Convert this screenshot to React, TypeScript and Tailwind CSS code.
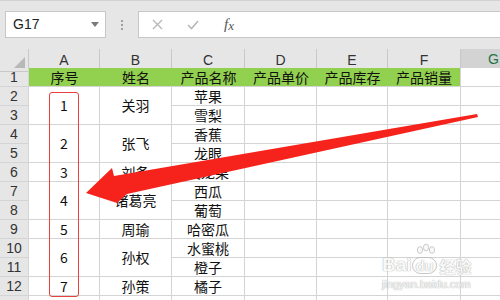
import React from 'react';

const colHeads = ['A', 'B', 'C', 'D', 'E', 'F'];

const rowHeads = [
    { n: '1', cls: 'row-start-1' },
    { n: '2', cls: 'row-start-2' },
    { n: '3', cls: 'row-start-3' },
    { n: '4', cls: 'row-start-4' },
    { n: '5', cls: 'row-start-5' },
    { n: '6', cls: 'row-start-6' },
    { n: '7', cls: 'row-start-7' },
    { n: '8', cls: 'row-start-8' },
    { n: '9', cls: 'row-start-9' },
    { n: '10', cls: 'row-start-10' },
    { n: '11', cls: 'row-start-11' },
    { n: '12', cls: 'row-start-12' },
    { n: '', cls: 'row-start-13' },
];

// merged cells in columns A and B
const groups = [
    { cls: 'row-start-2 row-span-2', id: '1', name: '关羽' },
    { cls: 'row-start-4 row-span-2', id: '2', name: '张飞' },
    { cls: 'row-start-6', id: '3', name: '刘备' },
    { cls: 'row-start-7 row-span-2', id: '4', name: '诸葛亮' },
    { cls: 'row-start-9', id: '5', name: '周瑜' },
    { cls: 'row-start-10 row-span-2', id: '6', name: '孙权' },
    { cls: 'row-start-12', id: '7', name: '孙策' },
    { cls: 'row-start-13', id: '', name: '' },
];

const products = ['苹果', '雪梨', '香蕉', '龙眼', '火龙果', '西瓜', '葡萄', '哈密瓜', '水蜜桃', '橙子', '橘子', ''];

const header = ['序号', '姓名', '产品名称', '产品单价', '产品库存', '产品销量'];

const cjk = "font-['Noto_Sans_CJK_SC',sans-serif]";

export default function App() {
    return (
        <div className="relative w-[500px] h-[300px] overflow-hidden bg-white font-['Liberation_Sans',sans-serif]">
            {/* Formula bar */}
            <div className="h-[49px] bg-[#e6e6e6] border-t border-[#d2d2d2] pt-[10px] flex items-start">
                <div className="ml-[5px] w-[101px] h-[27px] bg-white border border-[#c6c6c6] flex items-center pl-[7px] pr-[6px]">
                    <span className="text-[14px] text-[#222] flex-1">G17</span>
                    <svg width="8" height="5" viewBox="0 0 8 5">
                        <path d="M0 0 L8 0 L4 5 Z" fill="#7a7a7a" />
                    </svg>
                </div>
                <div className="w-[32px] h-[27px] flex flex-col items-center justify-center gap-[2px]">
                    <span className="w-[2px] h-[2px] bg-[#a0a0a0]" />
                    <span className="w-[2px] h-[2px] bg-[#a0a0a0]" />
                    <span className="w-[2px] h-[2px] bg-[#a0a0a0]" />
                </div>
                <div className="flex-1 h-[27px] bg-white border border-r-0 border-[#c6c6c6] flex items-center">
                    <span className="w-[36px] flex justify-center">
                        <svg width="11" height="11" viewBox="0 0 11 11">
                            <path d="M1 1 L10 10 M10 1 L1 10" stroke="#b8b8b8" strokeWidth="1.4" />
                        </svg>
                    </span>
                    <span className="w-[36px] flex justify-center">
                        <svg width="12" height="10" viewBox="0 0 12 10">
                            <path d="M1 5 L4.5 8.5 L11 1" stroke="#b8b8b8" strokeWidth="1.6" fill="none" />
                        </svg>
                    </span>
                    <span className="w-[36px] flex justify-center font-['Liberation_Serif',serif] italic text-[15px] text-[#555] leading-none">
                        f<span className="text-[13px] mt-[2px]">x</span>
                    </span>
                </div>
            </div>

            {/* Column headers */}
            <div className="grid grid-cols-[28px_70px_71px_72px_71px_70px_72px_1fr] gap-x-px bg-[#c8c8c8] h-[19px]">
                <div className="bg-[#e6e6e6] relative border-b border-[#c8c8c8]">
                    <svg className="absolute right-[3px] bottom-[3px]" width="11" height="11" viewBox="0 0 11 11">
                        <path d="M11 0 L11 11 L0 11 Z" fill="#b8b8b8" />
                    </svg>
                </div>
                {colHeads.map((c) => (
                    <div key={c} className="bg-[#e6e6e6] border-b border-[#92d050] flex items-center justify-center text-[14px] text-[#333]">
                        {c}
                    </div>
                ))}
                <div className="bg-[#d3d3d3] border-b-2 border-[#217346] flex items-center justify-start pl-[27px] text-[14px] text-[#217346]">
                    G
                </div>
            </div>

            {/* Sheet grid */}
            <div className={`grid grid-cols-[28px_70px_71px_72px_71px_70px_72px_1fr] grid-rows-[repeat(13,18px)] gap-px bg-[#d4d4d4] text-[14px] text-[#111] ${cjk}`}>
                {rowHeads.map((r) => (
                    <div key={r.cls} className={`${r.cls} col-start-1 bg-[#e6e6e6] flex items-center justify-center text-[#333] font-['Liberation_Sans',sans-serif]`}>
                        {r.n}
                    </div>
                ))}

                <div className="row-start-1 col-start-2 col-span-6 bg-[#92d050] grid grid-cols-[71px_72px_73px_72px_71px_72px]">
                    {header.map((h) => (
                        <div key={h} className="flex items-center justify-center leading-none">{h}</div>
                    ))}
                </div>

                {groups.map((g, i) => (
                    <div key={'a' + i} className={`${g.cls} col-start-2 bg-white flex items-center justify-center`}>
                        {g.id}
                    </div>
                ))}
                {groups.map((g, i) => (
                    <div key={'b' + i} className={`${g.cls} col-start-3 bg-white flex items-center justify-center`}>
                        {g.name}
                    </div>
                ))}

                {/* G1 */}
                <div className="bg-white" />
                {products.map((p, i) => (
                    <React.Fragment key={'r' + i}>
                        <div className="bg-white flex items-center justify-center leading-none">{p}</div>
                        <div className="bg-white" />
                        <div className="bg-white" />
                        <div className="bg-white" />
                        <div className="bg-white" />
                    </React.Fragment>
                ))}
            </div>

            {/* red highlight box */}
            <div className="absolute left-[49px] top-[92px] w-[30px] h-[205px] border border-[#e8403a] rounded-[3px]" />

            {/* red arrow */}
            <svg className="absolute left-0 top-0" width="500" height="300" viewBox="0 0 500 300">
                <polygon points="86,193 112,168 114,176 477,114 478,117 127,194 117,203" fill="#f5231b" />
            </svg>

            {/* watermark */}
            <div className="absolute left-[382px] top-[244px] flex flex-col items-start text-[#f8f8f8] opacity-80 [text-shadow:0_0_1px_#a0a0a0,0_0_1px_#a0a0a0]">
                <div className="flex items-end h-[30px]">
                    <span className="font-['Liberation_Sans',sans-serif] font-bold text-[19px] leading-none">Bai</span>
                    <span className="relative flex flex-col items-center">
                        <svg width="26" height="16" viewBox="0 0 26 16" className="-mb-[2px]">
                            <g fill="#f8f8f8" stroke="#b0b0b0" strokeWidth="0.8">
                                <ellipse cx="8" cy="7" rx="2.6" ry="3.4" />
                                <ellipse cx="14" cy="4.5" rx="2.6" ry="3.4" />
                                <ellipse cx="20" cy="7" rx="2.6" ry="3.4" />
                            </g>
                        </svg>
                        <span className="font-['Liberation_Sans',sans-serif] font-bold text-[15px] leading-none px-[2px] rounded-full border border-[#b8b8b8]">du</span>
                    </span>
                    <span className={`${cjk} font-bold text-[16px] leading-none ml-[2px]`}>经验</span>
                </div>
                <span className="font-['Liberation_Sans',sans-serif] text-[11px] leading-none mt-[5px]">jingyan.baidu.com</span>
            </div>
        </div>
    );
}
